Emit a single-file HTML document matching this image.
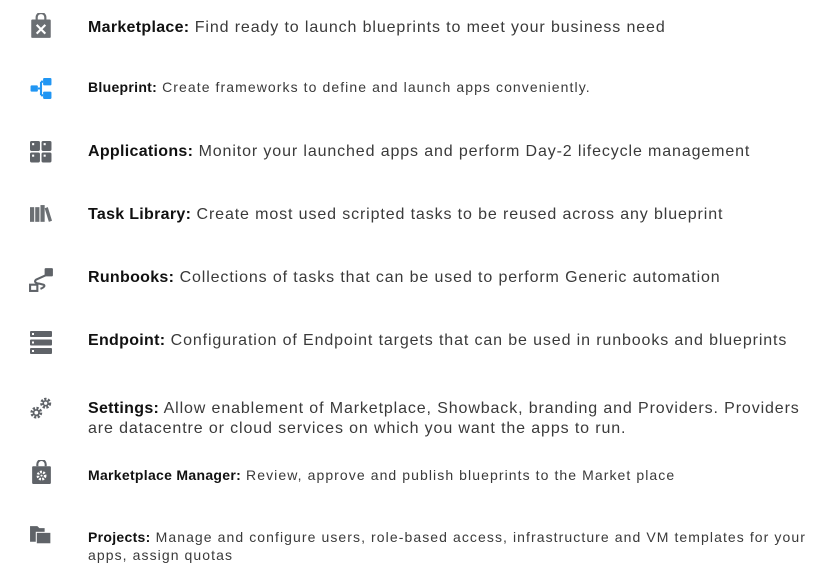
<!DOCTYPE html>
<html><head><meta charset="utf-8"><style>
body{margin:0;width:837px;height:587px;background:#fff;font-family:"Liberation Sans",sans-serif;color:#3a3a3a;position:relative;overflow:hidden}
.r{position:absolute;left:88px;white-space:nowrap;letter-spacing:0.88px}
.r b{color:#111;font-weight:bold;letter-spacing:0.3px}
.l{font-size:16px;line-height:20px}
.s{font-size:14px;line-height:18px;letter-spacing:1.08px}
svg{position:absolute}
</style></head><body>
<svg style="left:29px;top:13px" width="24" height="26" viewBox="0 0 22 24"><path d="M7 6V4a4 4 0 0 1 8 0v2" fill="none" stroke="#6b6f73" stroke-width="2"/><rect x="2" y="6" width="18" height="17" rx="1" fill="#6b6f73"/><path d="M7 11l8 8M15 11l-8 8" stroke="#fff" stroke-width="2"/></svg>
<div class="r l" style="top:18px"><b>Marketplace:</b> Find ready to launch blueprints to meet your business need</div>

<svg style="left:29px;top:77px" width="24" height="23" viewBox="0 0 22 22"><rect x="1" y="8" width="7" height="6" rx="1" fill="#2196f3"/><rect x="13" y="1" width="8" height="7" rx="1" fill="#2196f3"/><rect x="13" y="14" width="8" height="7" rx="1" fill="#2196f3"/><path d="M8 11h3M11 4.5v13M11 4.5h2M11 17.5h2" stroke="#2196f3" stroke-width="2" fill="none"/></svg>
<div class="r s" style="top:78px"><b>Blueprint:</b> Create frameworks to define and launch apps conveniently.</div>

<svg style="left:30px;top:141px" width="22" height="22" viewBox="0 0 21 21" fill="#5f6368"><rect x="0" y="0" width="9.5" height="9.5" rx="1.5"/><rect x="11" y="0" width="9.5" height="9.5" rx="1.5"/><rect x="0" y="11" width="9.5" height="9.5" rx="1.5"/><rect x="11" y="11" width="9.5" height="9.5" rx="1.5"/><g fill="#fff"><rect x="2" y="2" width="2" height="2"/><rect x="13" y="2" width="2" height="2"/><rect x="2" y="13" width="2" height="2"/><rect x="13" y="13" width="2" height="2"/></g></svg>
<div class="r l" style="top:142px"><b>Applications:</b> Monitor your launched apps and perform Day-2 lifecycle management</div>

<svg style="left:30px;top:205px" width="22" height="19" viewBox="0 0 21 18" fill="#6b6f73"><rect x="0" y="2" width="4" height="14"/><rect x="5" y="2" width="4" height="14"/><rect x="10" y="0" width="4" height="16"/><path d="M14 3l3-1 4 13-3 1z"/></svg>
<div class="r l" style="top:205px"><b>Task Library:</b> Create most used scripted tasks to be reused across any blueprint</div>

<svg style="left:28px;top:266px" width="27" height="27" viewBox="0 0 26 26"><rect x="16" y="2" width="8" height="8" rx="1" fill="#5f6368"/><path d="M17 9L8 13c-3 2 0 4 3 4l4 1c2 1 0 3-3 4" fill="none" stroke="#5f6368" stroke-width="2"/><rect x="2" y="18" width="7" height="6" fill="none" stroke="#5f6368" stroke-width="2"/></svg>
<div class="r l" style="top:268px"><b>Runbooks:</b> Collections of tasks that can be used to perform Generic automation</div>

<svg style="left:30px;top:331px" width="22" height="25" viewBox="0 0 22 25" fill="#5f6368"><rect x="0" y="0" width="22" height="6" rx="1"/><rect x="0" y="8.5" width="22" height="6" rx="1"/><rect x="0" y="17" width="22" height="6" rx="1"/><g fill="#fff"><rect x="2" y="2" width="2" height="2"/><rect x="2" y="10.5" width="2" height="2"/><rect x="2" y="19" width="2" height="2"/></g></svg>
<div class="r l" style="top:331px"><b>Endpoint:</b> Configuration of Endpoint targets that can be used in runbooks and blueprints</div>

<svg style="left:29px;top:396px" width="25" height="25" viewBox="0 0 24 24"><circle cx="7" cy="16" r="4.2" fill="none" stroke="#5f6368" stroke-width="3" stroke-dasharray="2 1.3"/><circle cx="7" cy="16" r="2.6" fill="none" stroke="#5f6368" stroke-width="1.6"/><circle cx="16" cy="7" r="3.8" fill="none" stroke="#5f6368" stroke-width="3" stroke-dasharray="2 1.3"/><circle cx="16" cy="7" r="2.3" fill="none" stroke="#5f6368" stroke-width="1.5"/></svg>
<div class="r l" style="top:399px;line-height:20px"><b>Settings:</b> Allow enablement of Marketplace, Showback, branding and Providers. Providers<br>are datacentre or cloud services on which you want the apps to run.</div>

<svg style="left:30px;top:460px" width="23" height="25" viewBox="0 0 22 24"><path d="M7 6V4a4 4 0 0 1 8 0v2" fill="none" stroke="#5f6368" stroke-width="2"/><rect x="2" y="6" width="18" height="17" rx="1" fill="#5f6368"/><circle cx="11" cy="15" r="3.5" fill="none" stroke="#fff" stroke-width="2.5" stroke-dasharray="1.8 1.2"/><circle cx="11" cy="15" r="1" fill="#fff"/></svg>
<div class="r s" style="top:466px"><b>Marketplace Manager:</b> Review, approve and publish blueprints to the Market place</div>

<svg style="left:29px;top:525px" width="25" height="23" viewBox="0 0 24 22"><path d="M1 1h7l2 2h5v13H1z" fill="#5f6368"/><rect x="7" y="7" width="14" height="11" fill="#5f6368" stroke="#fff" stroke-width="1"/></svg>
<div class="r s" style="top:528px;line-height:18px"><b>Projects:</b> Manage and configure users, role-based access, infrastructure and VM templates for your<br>apps, assign quotas</div>
</body></html>
